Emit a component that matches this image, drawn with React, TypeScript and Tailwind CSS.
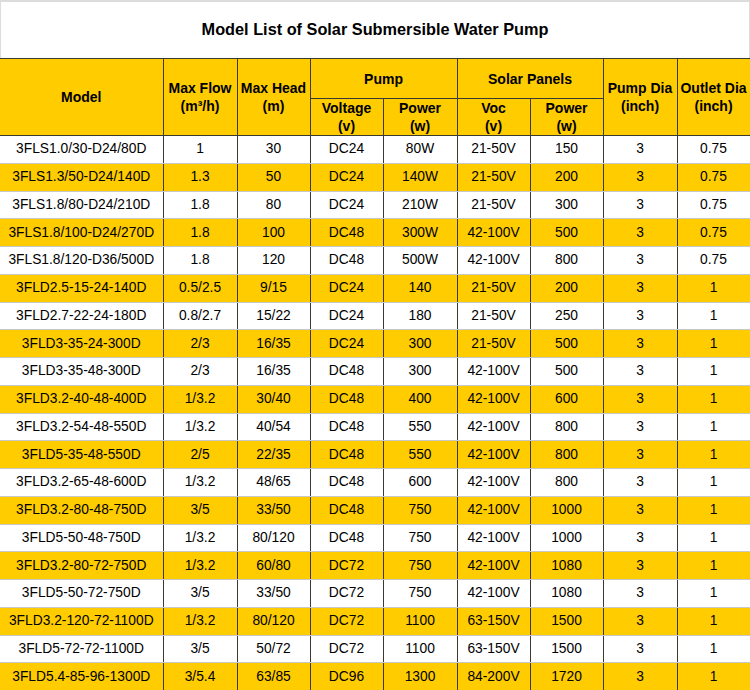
const ROWS = [
  ["3FLS1.0/30-D24/80D", "1", "30", "DC24", "80W", "21-50V", "150", "3", "0.75"],
  ["3FLS1.3/50-D24/140D", "1.3", "50", "DC24", "140W", "21-50V", "200", "3", "0.75"],
  ["3FLS1.8/80-D24/210D", "1.8", "80", "DC24", "210W", "21-50V", "300", "3", "0.75"],
  ["3FLS1.8/100-D24/270D", "1.8", "100", "DC48", "300W", "42-100V", "500", "3", "0.75"],
  ["3FLS1.8/120-D36/500D", "1.8", "120", "DC48", "500W", "42-100V", "800", "3", "0.75"],
  ["3FLD2.5-15-24-140D", "0.5/2.5", "9/15", "DC24", "140", "21-50V", "200", "3", "1"],
  ["3FLD2.7-22-24-180D", "0.8/2.7", "15/22", "DC24", "180", "21-50V", "250", "3", "1"],
  ["3FLD3-35-24-300D", "2/3", "16/35", "DC24", "300", "21-50V", "500", "3", "1"],
  ["3FLD3-35-48-300D", "2/3", "16/35", "DC48", "300", "42-100V", "500", "3", "1"],
  ["3FLD3.2-40-48-400D", "1/3.2", "30/40", "DC48", "400", "42-100V", "600", "3", "1"],
  ["3FLD3.2-54-48-550D", "1/3.2", "40/54", "DC48", "550", "42-100V", "800", "3", "1"],
  ["3FLD5-35-48-550D", "2/5", "22/35", "DC48", "550", "42-100V", "800", "3", "1"],
  ["3FLD3.2-65-48-600D", "1/3.2", "48/65", "DC48", "600", "42-100V", "800", "3", "1"],
  ["3FLD3.2-80-48-750D", "3/5", "33/50", "DC48", "750", "42-100V", "1000", "3", "1"],
  ["3FLD5-50-48-750D", "1/3.2", "80/120", "DC48", "750", "42-100V", "1000", "3", "1"],
  ["3FLD3.2-80-72-750D", "1/3.2", "60/80", "DC72", "750", "42-100V", "1080", "3", "1"],
  ["3FLD5-50-72-750D", "3/5", "33/50", "DC72", "750", "42-100V", "1080", "3", "1"],
  ["3FLD3.2-120-72-1100D", "1/3.2", "80/120", "DC72", "1100", "63-150V", "1500", "3", "1"],
  ["3FLD5-72-72-1100D", "3/5", "50/72", "DC72", "1100", "63-150V", "1500", "3", "1"],
  ["3FLD5.4-85-96-1300D", "3/5.4", "63/85", "DC96", "1300", "84-200V", "1720", "3", "1"],
];

const WIDTHS = [163, 74, 73, 73, 74, 73, 73, 74, 73];

export default function App() {
  const th = "border border-[#3a3a30] bg-[#ffcc00] font-bold text-[14px] leading-[18px] text-black text-center align-middle p-0";
  return (
    <div className="w-[750px] h-[690px] overflow-hidden bg-white font-['Liberation_Sans',Arial,sans-serif] text-black">
      <div className="h-[58px] flex items-center justify-center border-t-2 border-l border-r border-[#dcdcdc] text-[16.3px] font-bold pb-[1px]">
        Model List of Solar Submersible Water Pump
      </div>
      <table className="border-collapse table-fixed w-[750px]">
        <colgroup>
          {WIDTHS.map((w, i) => (
            <col key={i} style={{ width: w }} />
          ))}
        </colgroup>
        <thead>
          <tr className="h-[40px]">
            <th rowSpan={2} className={`${th} border-l-0`}>Model</th>
            <th rowSpan={2} className={th}>
              Max Flow
              <br />
              (m³/h)
            </th>
            <th rowSpan={2} className={th}>
              Max Head
              <br />
              (m)
            </th>
            <th colSpan={2} className={th}>Pump</th>
            <th colSpan={2} className={th}>Solar Panels</th>
            <th rowSpan={2} className={th}>
              Pump Dia
              <br />
              (inch)
            </th>
            <th rowSpan={2} className={th}>
              Outlet Dia
              <br />
              (inch)
            </th>
          </tr>
          <tr className="h-[36px]">
            <th className={th}>
              Voltage
              <br />
              (v)
            </th>
            <th className={th}>
              Power
              <br />
              (w)
            </th>
            <th className={th}>
              Voc
              <br />
              (v)
            </th>
            <th className={th}>
              Power
              <br />
              (w)
            </th>
          </tr>
        </thead>
        <tbody>
          {ROWS.map((row, r) => (
            <tr key={r} className={`h-[27.75px] ${r % 2 === 1 ? "bg-[#ffcc00]" : "bg-white"}`}>
              {row.map((cell, c) => (
                <td
                  key={c}
                  className={`border-x border-x-[#3a3a30] border-y border-y-[#c8c8c8] text-[13.8px] leading-[16px] text-center align-middle p-0 whitespace-nowrap ${c === 0 ? "border-l-0" : ""}`}
                >
                  {cell}
                </td>
              ))}
            </tr>
          ))}
        </tbody>
      </table>
    </div>
  );
}
